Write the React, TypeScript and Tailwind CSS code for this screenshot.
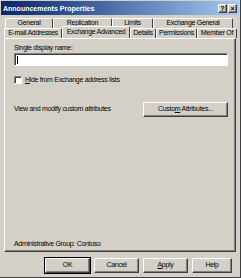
import React from 'react';

const raised =
  'border border-t-white border-l-white border-r-[#404040] border-b-[#404040] shadow-[inset_-1px_-1px_0_#808080]';

const sunken =
  'border border-t-[#808080] border-l-[#808080] border-r-white border-b-white shadow-[inset_1px_1px_0_#404040]';

const Btn: React.FC<{ label: React.ReactNode; w: string; def?: boolean }> = ({ label, w, def }) => (
  <div
    className={`${w} h-[15px] flex items-center justify-center whitespace-nowrap bg-[#d4d0c8] text-[7px] tracking-[-0.3px] text-black ${
      def ? 'outline outline-1 outline-black ' : ''
    }${raised}`}
  >
    {label}
  </div>
);

const Tab: React.FC<{ label: string; w: string; active?: boolean }> = ({ label, w, active }) => (
  <div
    className={`${w} ${
      active ? 'h-[12px] -mt-[2px] z-10 relative -mb-[1px] bg-[#d4d0c8]' : 'h-[10px]'
    } flex items-center justify-center whitespace-nowrap text-[7px] tracking-[-0.3px] text-black border-t border-l border-r border-t-white border-l-white border-r-[#404040] rounded-t-[2px]`}
  >
    {label}
  </div>
);

export default function App() {
  return (
    <div className="w-[241px] h-[278px] bg-[#d4d0c8] font-['Liberation_Sans',Arial,sans-serif] flex flex-col overflow-hidden border-r border-b border-r-[#404040] border-b-[#404040]">
      {/* title bar */}
      <div className="h-[14px] mx-[1px] mt-[1px] flex items-center justify-between bg-gradient-to-r from-[#0a246a] to-[#a6caf0] pl-[2px] pr-[2px]">
        <span className="text-white font-bold text-[7px] leading-none whitespace-nowrap">Announcements Properties</span>
        <div className="flex gap-[1px]">
          <div className={`w-[9px] h-[9px] bg-[#d4d0c8] ${raised} flex items-center justify-center text-[7px] font-bold leading-none`}>?</div>
          <div className={`w-[9px] h-[9px] bg-[#d4d0c8] ${raised} flex items-center justify-center text-[7px] font-bold leading-none`}>×</div>
        </div>
      </div>

      {/* tabs */}
      <div className="pt-[3px] flex flex-col">
        <div className="flex ml-[5px]">
          <Tab label="General" w="w-[48px]" />
          <Tab label="Replication" w="w-[59px]" />
          <Tab label="Limits" w="w-[41px]" />
          <Tab label="Exchange General" w="w-[80px]" />
        </div>
        <div className="flex ml-[4px]">
          <Tab label="E-mail Addresses" w="w-[58px]" />
          <Tab label="Exchange Advanced" w="w-[68px]" active />
          <Tab label="Details" w="w-[26px]" />
          <Tab label="Permissions" w="w-[41px]" />
          <Tab label="Member Of" w="w-[40px]" />
        </div>
      </div>

      {/* panel */}
      <div className="mx-[4px] h-[214px] border border-t-white border-l-white border-r-[#404040] border-b-[#404040] shadow-[inset_-1px_-1px_0_#808080] flex flex-col px-[9px] pt-[4px] text-[7px] tracking-[-0.3px] text-black whitespace-nowrap">
        <div className="leading-[9px]">Single display name:</div>
        <div className={`mt-[1px] h-[13px] w-[214px] bg-white ${sunken} flex items-center pl-[2px]`}>
          <div className="w-[1px] h-[8px] bg-black" />
        </div>
        <div className="mt-[9px] flex items-center gap-[3px] leading-[9px]">
          <div className={`w-[8px] h-[8px] bg-white ${sunken}`} />
          <span>
            <u>H</u>ide from Exchange address lists
          </span>
        </div>
        <div className="mt-[18px] flex items-center justify-between w-[214px]">
          <span>View and modify custom attributes</span>
          <Btn
            w="w-[85px]"
            label={
              <span>
                Custo<u>m</u> Attributes...
              </span>
            }
          />
        </div>
        <div className="mt-auto mb-[2px]">Administrative Group: Contoso</div>
      </div>

      {/* buttons */}
      <div className="flex justify-end gap-[4px] pr-[8px] mt-[6px]">
        <Btn w="w-[45px]" label="OK" def />
        <Btn w="w-[45px]" label="Cancel" />
        <Btn
          w="w-[45px]"
          label={
            <span>
              <u>A</u>pply
            </span>
          }
        />
        <Btn w="w-[40px]" label="Help" />
      </div>
    </div>
  );
}
